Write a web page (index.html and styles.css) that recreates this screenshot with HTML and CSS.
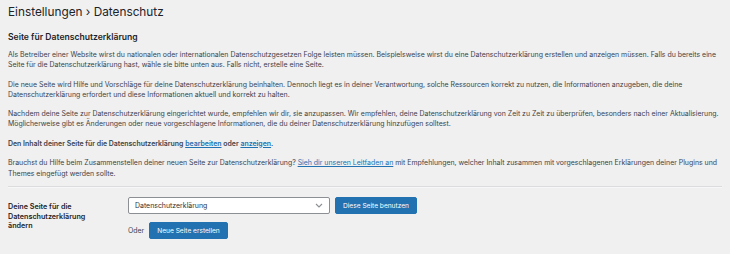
FILE: index.html
```html
<!DOCTYPE html>
<html lang="de">
<head>
<meta charset="utf-8">
<title>Datenschutz</title>
<link rel="stylesheet" href="styles.css">
</head>
<body>
<div class="wrap">
  <h1 class="title">Einstellungen › Datenschutz</h1>
  <h2 class="subtitle">Seite für Datenschutzerklärung</h2>
  <p class="text">Als Betreiber einer Website wirst du nationalen oder internationalen Datenschutzgesetzen Folge leisten müssen. Beispielsweise wirst du eine Datenschutzerklärung erstellen und anzeigen müssen. Falls du bereits eine Seite für die Datenschutzerklärung hast, wähle sie bitte unten aus. Falls nicht, erstelle eine Seite.</p>
  <p class="text">Die neue Seite wird Hilfe und Vorschläge für deine Datenschutzerklärung beinhalten. Dennoch liegt es in deiner Verantwortung, solche Ressourcen korrekt zu nutzen, die Informationen anzugeben, die deine Datenschutzerklärung erfordert und diese Informationen aktuell und korrekt zu halten.</p>
  <p class="text">Nachdem deine Seite zur Datenschutzerklärung eingerichtet wurde, empfehlen wir dir, sie anzupassen. Wir empfehlen, deine Datenschutzerklärung von Zeit zu Zeit zu überprüfen, besonders nach einer Aktualisierung. Möglicherweise gibt es Änderungen oder neue vorgeschlagene Informationen, die du deiner Datenschutzerklärung hinzufügen solltest.</p>
  <p class="text strong">Den Inhalt deiner Seite für die Datenschutzerklärung <a href="#" class="link">bearbeiten</a> oder <a href="#" class="link">anzeigen</a>.</p>
  <p class="text last">Brauchst du Hilfe beim Zusammenstellen deiner neuen Seite zur Datenschutzerklärung? <a href="#" class="link">Sieh dir unseren Leitfaden an</a> mit Empfehlungen, welcher Inhalt zusammen mit vorgeschlagenen Erklärungen deiner Plugins und Themes eingefügt werden sollte.</p>
  <hr class="sep">
  <div class="form-row">
    <div class="label">Deine Seite für die Datenschutzerklärung ändern</div>
    <div class="field">
      <div class="line">
        <div class="select">
          <span>Datenschutzerklärung</span>
          <svg class="chev" width="8" height="5" viewBox="0 0 8 5"><path d="M1 1l3 3 3-3" fill="none" stroke="#8c8f94" stroke-width="1.1"/></svg>
        </div>
        <button class="btn">Diese Seite benutzen</button>
      </div>
      <div class="line">
        <span class="or">Oder</span>
        <button class="btn">Neue Seite erstellen</button>
      </div>
    </div>
  </div>
</div>
</body>
</html>
```

FILE: styles.css
```css
* { box-sizing: border-box; }
html, body { margin: 0; padding: 0; }
body {
  background: #f0f0f1;
  color: #3c434a;
  font-family: Inter, "Liberation Sans", sans-serif;
  width: 730px;
  height: 254px;
  overflow: hidden;
}
.wrap { padding: 0 8px; }
.title {
  margin: 0;
  padding-top: 4px;
  font-size: 11.8px;
  line-height: 16px;
  font-weight: 400;
  color: #1d2327;
}
.subtitle {
  margin: 11px 0 7px;
  font-size: 8.6px;
  line-height: 12px;
  font-weight: 600;
  color: #1d2327;
}
.text {
  margin: 0 0 9.5px;
  font-size: 6.95px;
  line-height: 10px;
  max-width: 718px;
}
.text.last { margin-bottom: 7px; line-height: 10.5px; }
.strong { font-weight: 600; }
.link { color: #2271b1; text-decoration: underline; line-height: 1; }
.sep {
  margin: 0;
  border: 0;
  border-top: 1px solid #dcdcde;
  border-bottom: 1px solid #f6f7f7;
  height: 0;
  width: 714px;
}
.form-row {
  display: flex;
  padding-top: 9px;
}
.label {
  width: 120px;
  padding-top: 5px;
  font-size: 7.2px;
  line-height: 9.5px;
  font-weight: 600;
  color: #1d2327;
  padding-right: 20px;
}
.field {
  display: flex;
  flex-direction: column;
  gap: 8px;
}
.line {
  display: flex;
  align-items: center;
  gap: 5px;
}
.select {
  width: 202px;
  height: 17px;
  background: #fff;
  border: 1px solid #8c8f94;
  border-radius: 2px;
  display: flex;
  align-items: center;
  justify-content: space-between;
  padding: 0 6px 0 6px;
  font-size: 6.95px;
  color: #2c3338;
}
.chev { display: block; }
.btn {
  height: 17px;
  padding: 0 7px;
  background: #2271b1;
  border: 1px solid #2271b1;
  border-radius: 2px;
  color: #fff;
  font-family: inherit;
  font-size: 6.6px;
}
.or { font-size: 6.95px; }
```
